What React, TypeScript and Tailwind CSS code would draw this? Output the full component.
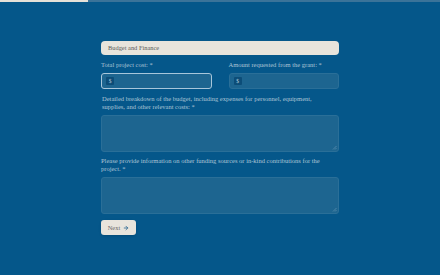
import { ArrowRight } from "lucide-react";

export default function App() {
  return (
    <div className="min-h-[275px] w-full bg-[#05578a] font-['Liberation_Serif',serif]">
      {/* progress */}
      <div className="flex h-[2px] w-full bg-[#3b7399]">
        <div className="h-full w-[88px] bg-[#e6e1d8]" />
      </div>

      <div className="mx-auto w-[238px] pt-[39px]">
        <div className="flex h-[14px] items-center rounded-[4px] bg-[#e8e4dc] px-[7px] text-[6.4px] text-[#5b5b5b]">
          Budget and Finance
        </div>

        <div className="mt-[6px] grid grid-cols-2 gap-x-[17px]">
          <MoneyField label="Total project cost:" focused />
          <MoneyField label="Amount requested from the grant:" />
        </div>

        <TextField label="Detailed breakdown of the budget, including expenses for personnel, equipment, supplies, and other relevant costs:" indent />
        <TextField label="Please provide information on other funding sources or in-kind contributions for the project." tight />

        <button className="mt-[6px] flex h-[15px] w-[35px] items-center justify-center gap-[3px] rounded-[3px] bg-[#e8e4dc] text-[6.5px] text-[#6a6a6a] shadow-sm">
          Next
          <ArrowRight size={6} strokeWidth={3} className="text-[#1d5f8c]" />
        </button>
      </div>
    </div>
  );
}

function MoneyField({ label, focused }: { label: string; focused?: boolean }) {
  return (
    <div>
      <div className="text-[6.5px] leading-[8px] text-[#adc5d6]">{label + " *"}</div>
      <div
        className={
          focused
            ? "mt-[4px] flex h-[16px] items-center rounded-[3px] border border-[#a8c6da] bg-[#1d6590] px-[4px]"
            : "mt-[4px] flex h-[16px] items-center rounded-[3px] border border-[#2a6f98] bg-[#1d6590] px-[4px]"
        }
      >
        <div className="flex h-[8px] w-[8px] items-center justify-center rounded-[1px] bg-[#0c4d78] text-[5.5px] text-[#b9cfdd]">
          $
        </div>
      </div>
    </div>
  );
}

function TextField({ label, indent, tight }: { label: string; indent?: boolean; tight?: boolean }) {
  return (
    <div className={tight ? "mt-[5px]" : "mt-[6px]"}>
      <div className={indent ? "pl-[1px] pr-[13px] text-[6.5px] leading-[8px] text-[#adc5d6]" : "pr-[13px] text-[6.5px] leading-[8px] text-[#adc5d6]"}>
        {label + " *"}
      </div>
      <div className="relative mt-[4px] h-[37px] rounded-[3px] border border-[#2a6f98] bg-[#1d6590]">
        <svg className="absolute bottom-[1px] right-[1px]" width="5" height="5" viewBox="0 0 5 5">
          <path d="M4.5 1 L1 4.5 M4.5 3 L3 4.5" stroke="#6f9bb8" strokeWidth="0.6" />
        </svg>
      </div>
    </div>
  );
}
